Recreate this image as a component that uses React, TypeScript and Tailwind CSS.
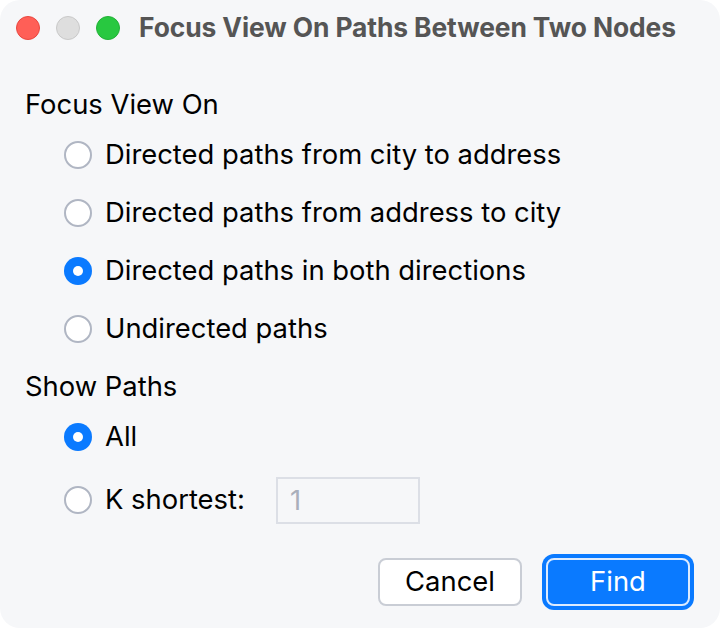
import { useState } from 'react'

type Choice = { id: string; label: string }

const DIRECTIONS: Choice[] = [
  { id: 'city-address', label: 'Directed paths from city to address' },
  { id: 'address-city', label: 'Directed paths from address to city' },
  { id: 'both', label: 'Directed paths in both directions' },
  { id: 'undirected', label: 'Undirected paths' },
]

function Radio({ checked }: { checked: boolean }) {
  return checked ? (
    <span className="w-[28px] h-[28px] rounded-full bg-[#0a7aff] flex items-center justify-center shrink-0">
      <span className="w-[10px] h-[10px] rounded-full bg-white" />
    </span>
  ) : (
    <span className="w-[28px] h-[28px] rounded-full bg-white border-2 border-[#b0b6c3] shrink-0" />
  )
}

export default function App() {
  const [direction, setDirection] = useState('both')
  const [showAll, setShowAll] = useState(true)
  const [k, setK] = useState('')

  return (
    <div className="w-[720px] h-[628px] bg-white">
      <div
        className="w-full h-full bg-[#f6f7f9] rounded-[20px] flex flex-col text-black"
        style={{ fontFamily: 'Inter, "Noto Sans", sans-serif' }}
      >
        {/* Title bar */}
        <div className="h-14 flex items-center pl-4 shrink-0">
          <span className="w-6 h-6 rounded-full bg-[#ff5f57] border border-[#e9473f]" />
          <span className="w-6 h-6 rounded-full bg-[#dedede] border border-[#c9c9c9] ml-4" />
          <span className="w-6 h-6 rounded-full bg-[#28c840] border border-[#22b137] ml-4" />
          <span className="ml-[19px] text-[26.4px] font-bold text-[#555555] tracking-[-0.1px]">
            Focus View On Paths Between Two Nodes
          </span>
        </div>

        <div className="flex flex-col pl-[25px] pr-[30px] pt-[28px] text-[27.4px]">
          <div className="h-[42px] flex items-center">Focus View On</div>
          {DIRECTIONS.map(d => (
            <button
              key={d.id}
              type="button"
              onClick={() => setDirection(d.id)}
              className="h-[58px] flex items-center gap-[13px] ml-[39px] text-left"
            >
              <Radio checked={direction === d.id} />
              <span>{d.label}</span>
            </button>
          ))}

          <div className="h-[58px] flex items-center">Show Paths</div>
          <button
            type="button"
            onClick={() => setShowAll(true)}
            className="h-[42px] flex items-center gap-[13px] ml-[39px]"
          >
            <Radio checked={showAll} />
            <span>All</span>
          </button>
          <div className="h-[48px] mt-[18px] flex items-center ml-[39px]">
            <button
              type="button"
              onClick={() => setShowAll(false)}
              className="flex items-center gap-[13px]"
            >
              <Radio checked={!showAll} />
              <span>K shortest:</span>
            </button>
            <input
              value={k}
              onChange={e => setK(e.target.value)}
              placeholder="1"
              disabled={showAll}
              className="ml-[31px] w-[144px] h-[47px] border-2 border-[#dcdfe6] bg-[#f6f7f9] px-3 text-[27.4px] text-[#a9afbb] placeholder:text-[#a9afbb] outline-none"
            />
          </div>

          <div className="flex justify-end gap-6 mt-[34px]">
            <button
              type="button"
              className="w-[144px] h-[48px] rounded-lg border-2 border-[#c9cdd5] bg-white text-[27.4px]"
            >
              Cancel
            </button>
            <button
              type="button"
              className="w-[144px] h-[48px] rounded-lg border-2 border-[#dcebff] bg-[#0a7aff] text-white text-[27.4px] ring-4 ring-[#0a7aff]"
            >
              Find
            </button>
          </div>
        </div>
      </div>
    </div>
  )
}
